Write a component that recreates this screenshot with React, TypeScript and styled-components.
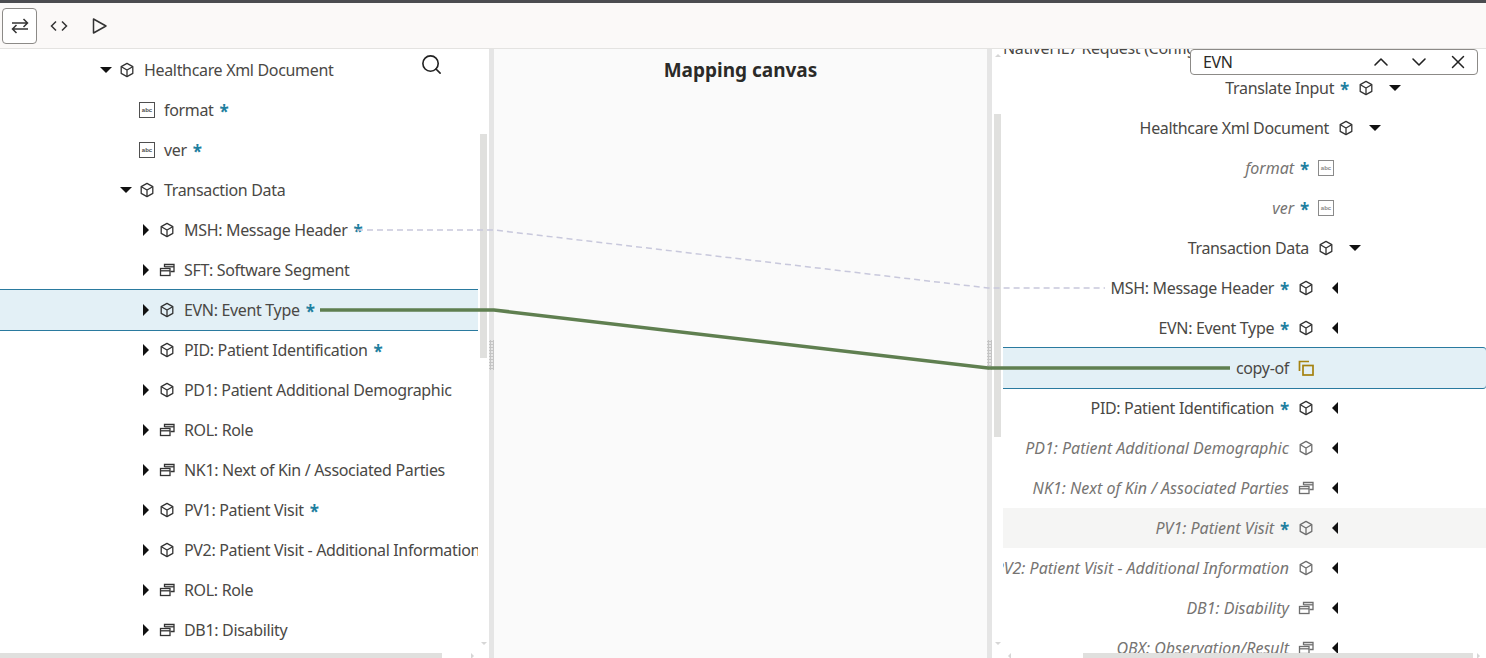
import React from "react";
import styled, { createGlobalStyle } from "styled-components";
import { ChevronDown, ChevronUp, Search, X } from "lucide-react";

type Kind = "cube" | "group" | "text" | "copy";
type CaretDir = "down" | "right" | "left";

interface SourceRow {
  label: string;
  level: number;
  kind: Kind;
  caret?: CaretDir;
  required?: boolean;
  selected?: boolean;
}

interface TargetRow extends SourceRow {
  optional?: boolean;
  hovered?: boolean;
}

const SOURCE_ROWS: SourceRow[] = [
  { label: "Healthcare Xml Document", level: 0, kind: "cube", caret: "down" },
  { label: "format", level: 1, kind: "text", required: true },
  { label: "ver", level: 1, kind: "text", required: true },
  { label: "Transaction Data", level: 1, kind: "cube", caret: "down" },
  { label: "MSH: Message Header", level: 2, kind: "cube", caret: "right", required: true },
  { label: "SFT: Software Segment", level: 2, kind: "group", caret: "right" },
  { label: "EVN: Event Type", level: 2, kind: "cube", caret: "right", required: true, selected: true },
  { label: "PID: Patient Identification", level: 2, kind: "cube", caret: "right", required: true },
  { label: "PD1: Patient Additional Demographic", level: 2, kind: "cube", caret: "right" },
  { label: "ROL: Role", level: 2, kind: "group", caret: "right" },
  { label: "NK1: Next of Kin / Associated Parties", level: 2, kind: "group", caret: "right" },
  { label: "PV1: Patient Visit", level: 2, kind: "cube", caret: "right", required: true },
  { label: "PV2: Patient Visit - Additional Information", level: 2, kind: "cube", caret: "right" },
  { label: "ROL: Role", level: 2, kind: "group", caret: "right" },
  { label: "DB1: Disability", level: 2, kind: "group", caret: "right" },
];

const TARGET_ROWS: TargetRow[] = [
  { label: "Translate Input", level: 0, kind: "cube", caret: "down", required: true },
  { label: "Healthcare Xml Document", level: 1, kind: "cube", caret: "down" },
  { label: "format", level: 2, kind: "text", required: true, optional: true },
  { label: "ver", level: 2, kind: "text", required: true, optional: true },
  { label: "Transaction Data", level: 2, kind: "cube", caret: "down" },
  { label: "MSH: Message Header", level: 3, kind: "cube", caret: "left", required: true },
  { label: "EVN: Event Type", level: 3, kind: "cube", caret: "left", required: true },
  { label: "copy-of", level: 3, kind: "copy", selected: true },
  { label: "PID: Patient Identification", level: 3, kind: "cube", caret: "left", required: true },
  { label: "PD1: Patient Additional Demographic", level: 3, kind: "cube", caret: "left", optional: true },
  { label: "NK1: Next of Kin / Associated Parties", level: 3, kind: "group", caret: "left", optional: true },
  { label: "PV1: Patient Visit", level: 3, kind: "cube", caret: "left", required: true, optional: true, hovered: true },
  { label: "PV2: Patient Visit - Additional Information", level: 3, kind: "cube", caret: "left", optional: true },
  { label: "DB1: Disability", level: 3, kind: "group", caret: "left", optional: true },
  { label: "OBX: Observation/Result", level: 3, kind: "group", caret: "left", optional: true },
];

const NodeIcon: React.FC<{ kind: Kind; faded?: boolean }> = ({ kind, faded }) => {
  if (kind === "text") {
    return <TextBadge $faded={faded}>abc</TextBadge>;
  }
  const stroke = kind === "copy" ? "#a5820f" : faded ? "#6f6f6f" : "#333";
  return (
    <IconSvg viewBox="0 0 16 16" fill="none" stroke={stroke} strokeWidth={1.3}>
      {kind === "cube" && (
        <>
          <path d="M8 1.4 13.8 4.6V11.4L8 14.6 2.2 11.4V4.6Z" strokeLinejoin="round" />
          <path d="M2.4 4.8 8 8l5.6-3.2M8 8v6.4" />
        </>
      )}
      {kind === "group" && (
        <>
          <path d="M5.5 5V2.5H15V9.5H11.5" />
          <path d="M5.5 4.8H15" />
          <rect x="1.5" y="6.5" width="9.5" height="7" />
          <path d="M1.5 8.8H11" />
        </>
      )}
      {kind === "copy" && (
        <>
          <path d="M11 1.5H1.5V11" strokeWidth={1.7} />
          <rect x="5" y="5.5" width="10" height="9.5" strokeWidth={1.7} />
        </>
      )}
    </IconSvg>
  );
};

const App: React.FC = () => {
  return (
    <Page>
      <GlobalStyle />
      <TopEdge />
      <Toolbar>
        <ToolButton $active>
          <svg width="18" height="16" viewBox="0 0 18 16" fill="none" stroke="#333" strokeWidth={1.5}>
            <path d="M1 5H16.5M12.5 1 16.5 5 12.5 9" />
            <path d="M17 11H1.5M5.5 7 1.5 11 5.5 15" />
          </svg>
        </ToolButton>
        <ToolButton>
          <svg width="18" height="12" viewBox="0 0 18 12" fill="none" stroke="#333" strokeWidth={1.5}>
            <path d="M6 1.5 1.5 6 6 10.5M12 1.5 16.5 6 12 10.5" />
          </svg>
        </ToolButton>
        <ToolButton>
          <svg width="18" height="18" viewBox="0 0 18 18" fill="none" stroke="#333" strokeWidth={1.5}>
            <path d="M3.5 2 16 9 3.5 16Z" strokeLinejoin="round" />
          </svg>
        </ToolButton>
      </Toolbar>

      <Panes>
        <SourcePane>
          <PaneBody>
            <SourceList>
              {SOURCE_ROWS.map((row, i) => (
                <SourceItem key={i} $level={row.level} $selected={row.selected}>
                  <CaretSlot>{row.caret && <Caret $dir={row.caret} />}</CaretSlot>
                  <NodeIcon kind={row.kind} />
                  <Label>{row.label}</Label>
                  {row.required && <Star>*</Star>}
                </SourceItem>
              ))}
            </SourceList>
            <SourceTrack>
              <Thumb $height={224} />
              <ArrowDown />
            </SourceTrack>
          </PaneBody>
          <HScroll>
            <HThumb $start={0} $width={442} />
            <ArrowRight $start={29} />
          </HScroll>
          <SearchButton>
            <Search size={23} color="#222" strokeWidth={1.7} />
          </SearchButton>
        </SourcePane>

        <Splitter>
          <Grip />
        </Splitter>

        <Canvas>
          <CanvasTitle>Mapping canvas</CanvasTitle>
        </Canvas>

        <Splitter>
          <Grip />
        </Splitter>

        <TargetPane>
          <PaneBody>
            <TargetTrack>
              <ArrowUp />
              <Thumb $height={323} />
              <ArrowDown />
            </TargetTrack>
            <TargetList>
              <RootRow>NativeHL7 Request (Configuration Properties)</RootRow>
              {TARGET_ROWS.map((row, i) => (
                <TargetItem key={i} $level={row.level} $selected={row.selected} $hovered={row.hovered}>
                  <Label $optional={row.optional}>{row.label}</Label>
                  {row.required && <Star>*</Star>}
                  <TargetIcon>
                    <NodeIcon kind={row.kind} faded={row.optional} />
                  </TargetIcon>
                  <TargetCaret>{row.caret && <Caret $dir={row.caret} />}</TargetCaret>
                </TargetItem>
              ))}
            </TargetList>
          </PaneBody>
          <HScroll>
            <ArrowLeft />
            <HThumb $start={72} $width={390} />
            <ArrowRight $start={4} />
          </HScroll>
          <FindBar>
            <FindText>EVN</FindText>
            <FindButtons>
              <ChevronUp size={24} color="#222" strokeWidth={1.6} />
              <ChevronDown size={24} color="#222" strokeWidth={1.6} />
              <CloseIcon size={22} color="#222" strokeWidth={1.6} />
            </FindButtons>
          </FindBar>
        </TargetPane>

        <Connectors viewBox="0 0 1486 609" width="1486" height="609">
          <polyline
            points="357,181 494,181 988,239 1105,239"
            fill="none"
            stroke="#c8c8dc"
            strokeWidth={1.5}
            strokeDasharray="6 4"
          />
          <polyline
            points="320,261 494,261 988,319 1230,319"
            fill="none"
            stroke="#5f7f50"
            strokeWidth={3.5}
          />
        </Connectors>
      </Panes>
    </Page>
  );
};

const GlobalStyle = createGlobalStyle`
  html, body {
    margin: 0;
    padding: 0;
    background: #fff;
  }

  * {
    box-sizing: border-box;
  }
`;

const Page = styled.div`
  width: 1486px;
  height: 658px;
  overflow: hidden;
  display: flex;
  flex-direction: column;
  font-family: "Noto Sans", "Open Sans", sans-serif;
  font-size: 16px;
  letter-spacing: -0.33px;
  color: #4a4845;
`;

const TopEdge = styled.div`
  height: 3px;
  background: #4b4c50;
`;

const Toolbar = styled.div`
  height: 46px;
  display: flex;
  align-items: center;
  padding: 0 2px;
  gap: 4px;
  background: #fbf9f8;
  border-bottom: 1px solid #e4e3e1;
`;

const ToolButton = styled.div<{ $active?: boolean }>`
  width: ${({ $active }) => ($active ? "35px" : "36px")};
  height: 36px;
  display: flex;
  align-items: center;
  justify-content: center;
  border-radius: 4px;
  border: 1px solid ${({ $active }) => ($active ? "#8c8a87" : "transparent")};
  background: ${({ $active }) => ($active ? "#fff" : "transparent")};
`;

const Panes = styled.div`
  position: relative;
  flex: 1;
  min-height: 0;
  display: flex;
`;

const SourcePane = styled.section`
  position: relative;
  width: 489px;
  display: flex;
  flex-direction: column;
  background: #fff;
`;

const TargetPane = styled.section`
  position: relative;
  width: 494px;
  display: flex;
  flex-direction: column;
  background: #fff;
`;

const PaneBody = styled.div`
  flex: 1;
  min-height: 0;
  display: flex;
`;

const SourceList = styled.ul`
  width: 478px;
  margin: 0;
  padding: 1px 0 0;
  list-style: none;
  overflow: hidden;
`;

const TargetList = styled.ul`
  width: 483px;
  margin: 0;
  padding: 0;
  list-style: none;
  overflow: hidden;
`;

const SourceItem = styled.li<{ $level: number; $selected?: boolean }>`
  height: 40px;
  display: flex;
  align-items: center;
  white-space: nowrap;
  padding-left: ${({ $level }) => 100 + $level * 20}px;
  background: ${({ $selected }) => ($selected ? "#e3f0f6" : "transparent")};
  box-shadow: ${({ $selected }) =>
    $selected ? "0 -1px 0 #2a7a9f, 0 1px 0 #2a7a9f" : "none"};
`;

const RootRow = styled.li`
  height: 40px;
  margin-top: -21px;
  display: flex;
  align-items: center;
  white-space: nowrap;
`;

const TargetItem = styled.li<{ $level: number; $selected?: boolean; $hovered?: boolean }>`
  height: 40px;
  display: flex;
  align-items: center;
  justify-content: flex-end;
  white-space: nowrap;
  padding-right: ${({ $level }) => 79 + $level * 20}px;
  border-radius: ${({ $selected }) => ($selected ? "0 3px 3px 0" : "0")};
  background: ${({ $selected, $hovered }) =>
    $selected ? "#e3f0f6" : $hovered ? "#f5f5f4" : "transparent"};
  box-shadow: ${({ $selected }) =>
    $selected ? "0 -1px 0 #2a7a9f, 0 1px 0 #2a7a9f" : "none"};
`;

const CaretSlot = styled.span`
  width: 19px;
  flex: none;
  display: flex;
  align-items: center;
`;

const Caret = styled.i<{ $dir: CaretDir }>`
  display: block;
  width: 0;
  height: 0;
  border-style: solid;
  ${({ $dir }) =>
    $dir === "down"
      ? "border-width: 6px 6px 0 6px; border-color: #111 transparent transparent transparent;"
      : $dir === "right"
        ? "margin-left: 3px; border-width: 6px 0 6px 6px; border-color: transparent transparent transparent #111;"
        : "border-width: 6px 6px 6px 0; border-color: transparent #111 transparent transparent;"}
`;

const IconSvg = styled.svg`
  width: 16px;
  height: 16px;
  flex: none;
  display: block;
`;

const TextBadge = styled.span<{ $faded?: boolean }>`
  width: 16px;
  height: 16px;
  flex: none;
  display: flex;
  align-items: center;
  justify-content: center;
  border: 1.5px solid ${({ $faded }) => ($faded ? "#8a8a8a" : "#4f4f4f")};
  font-family: "Liberation Sans", sans-serif;
  font-size: 6px;
  font-weight: 700;
  letter-spacing: 0;
  line-height: 1;
  color: ${({ $faded }) => ($faded ? "#8a8a8a" : "#4f4f4f")};
`;

const Label = styled.span<{ $optional?: boolean }>`
  font-style: ${({ $optional }) => ($optional ? "italic" : "normal")};
  letter-spacing: ${({ $optional }) => ($optional ? "0" : "inherit")};
  color: ${({ $optional }) => ($optional ? "#767472" : "inherit")};
  ${IconSvg} + &, ${TextBadge} + & {
    margin-left: 9px;
  }
`;

const Star = styled.span`
  margin: 3px 0 0 6px;
  height: 22px;
  font-size: 17px;
  line-height: 22px;
  font-weight: 700;
  color: #1f7f9f;
`;

const TargetIcon = styled.span`
  margin-left: 9px;
  flex: none;
  display: flex;
`;

const TargetCaret = styled.span`
  width: 24px;
  margin-left: 9px;
  flex: none;
  display: flex;
  justify-content: center;
`;

const Track = styled.div`
  width: 11px;
  flex: none;
  display: flex;
  flex-direction: column;
  align-items: center;
  position: relative;
`;

const SourceTrack = styled(Track)`
  padding-top: 85px;
  background: #fff;
`;

const TargetTrack = styled(Track)`
  padding-top: 65px;
`;

const Thumb = styled.div<{ $height: number }>`
  width: 7px;
  height: ${({ $height }) => $height}px;
  background: #e0e0de;
`;

const ArrowDown = styled.i`
  position: absolute;
  bottom: 8px;
  width: 0;
  height: 0;
  border-style: solid;
  border-width: 3px 3px 0 3px;
  border-color: #d6d6d6 transparent transparent transparent;
`;

const ArrowUp = styled.i`
  position: absolute;
  top: 5px;
  width: 0;
  height: 0;
  border-style: solid;
  border-width: 0 3px 3px 3px;
  border-color: transparent transparent #d6d6d6 transparent;
`;

const HScroll = styled.div`
  height: 5px;
  flex: none;
  display: flex;
  align-items: center;
  background: #fff;
`;

const HThumb = styled.div<{ $start: number; $width: number }>`
  height: 5px;
  margin-left: ${({ $start }) => $start}px;
  width: ${({ $width }) => $width}px;
  background: #e0e0de;
`;

const ArrowRight = styled.i<{ $start: number }>`
  margin-left: ${({ $start }) => $start}px;
  width: 0;
  height: 0;
  border-style: solid;
  border-width: 3px 0 3px 3px;
  border-color: transparent transparent transparent #d6d6d6;
`;

const ArrowLeft = styled.i`
  margin-left: 16px;
  width: 0;
  height: 0;
  border-style: solid;
  border-width: 3px 3px 3px 0;
  border-color: transparent #d6d6d6 transparent transparent;
`;

const Splitter = styled.div`
  width: 5px;
  flex: none;
  display: flex;
  align-items: center;
  padding-top: 3px;
  background: #e5e5e5;
`;

const Grip = styled.div`
  width: 5px;
  height: 30px;
  background-image: radial-gradient(#c4c4c4 1.2px, transparent 1.2px);
  background-size: 3px 3px;
`;

const Canvas = styled.main`
  width: 493px;
  flex: none;
  display: flex;
  justify-content: center;
  padding-top: 8px;
  background: #fafafa;
`;

const CanvasTitle = styled.h2`
  margin: 0;
  font-size: 19px;
  line-height: 26px;
  font-weight: 700;
  letter-spacing: 0;
  color: #2b2a28;
`;

const SearchButton = styled.div`
  position: absolute;
  left: 420px;
  top: 4px;
  display: flex;
`;

const FindBar = styled.div`
  position: absolute;
  left: 198px;
  top: 0;
  width: 288px;
  height: 26px;
  display: flex;
  align-items: center;
  justify-content: space-between;
  padding: 0 8px 0 12px;
  background: #fff;
  border: 1px solid #8c8a87;
  border-radius: 4px;
  color: #2b2a28;
`;

const FindText = styled.span`
  font-size: 16px;
`;

const FindButtons = styled.div`
  display: flex;
  align-items: center;
  gap: 14px;
`;

const CloseIcon = styled(X)`
  margin-left: 2px;
`;

const Connectors = styled.svg`
  position: absolute;
  left: 0;
  top: 0;
  pointer-events: none;
`;

export default App;
